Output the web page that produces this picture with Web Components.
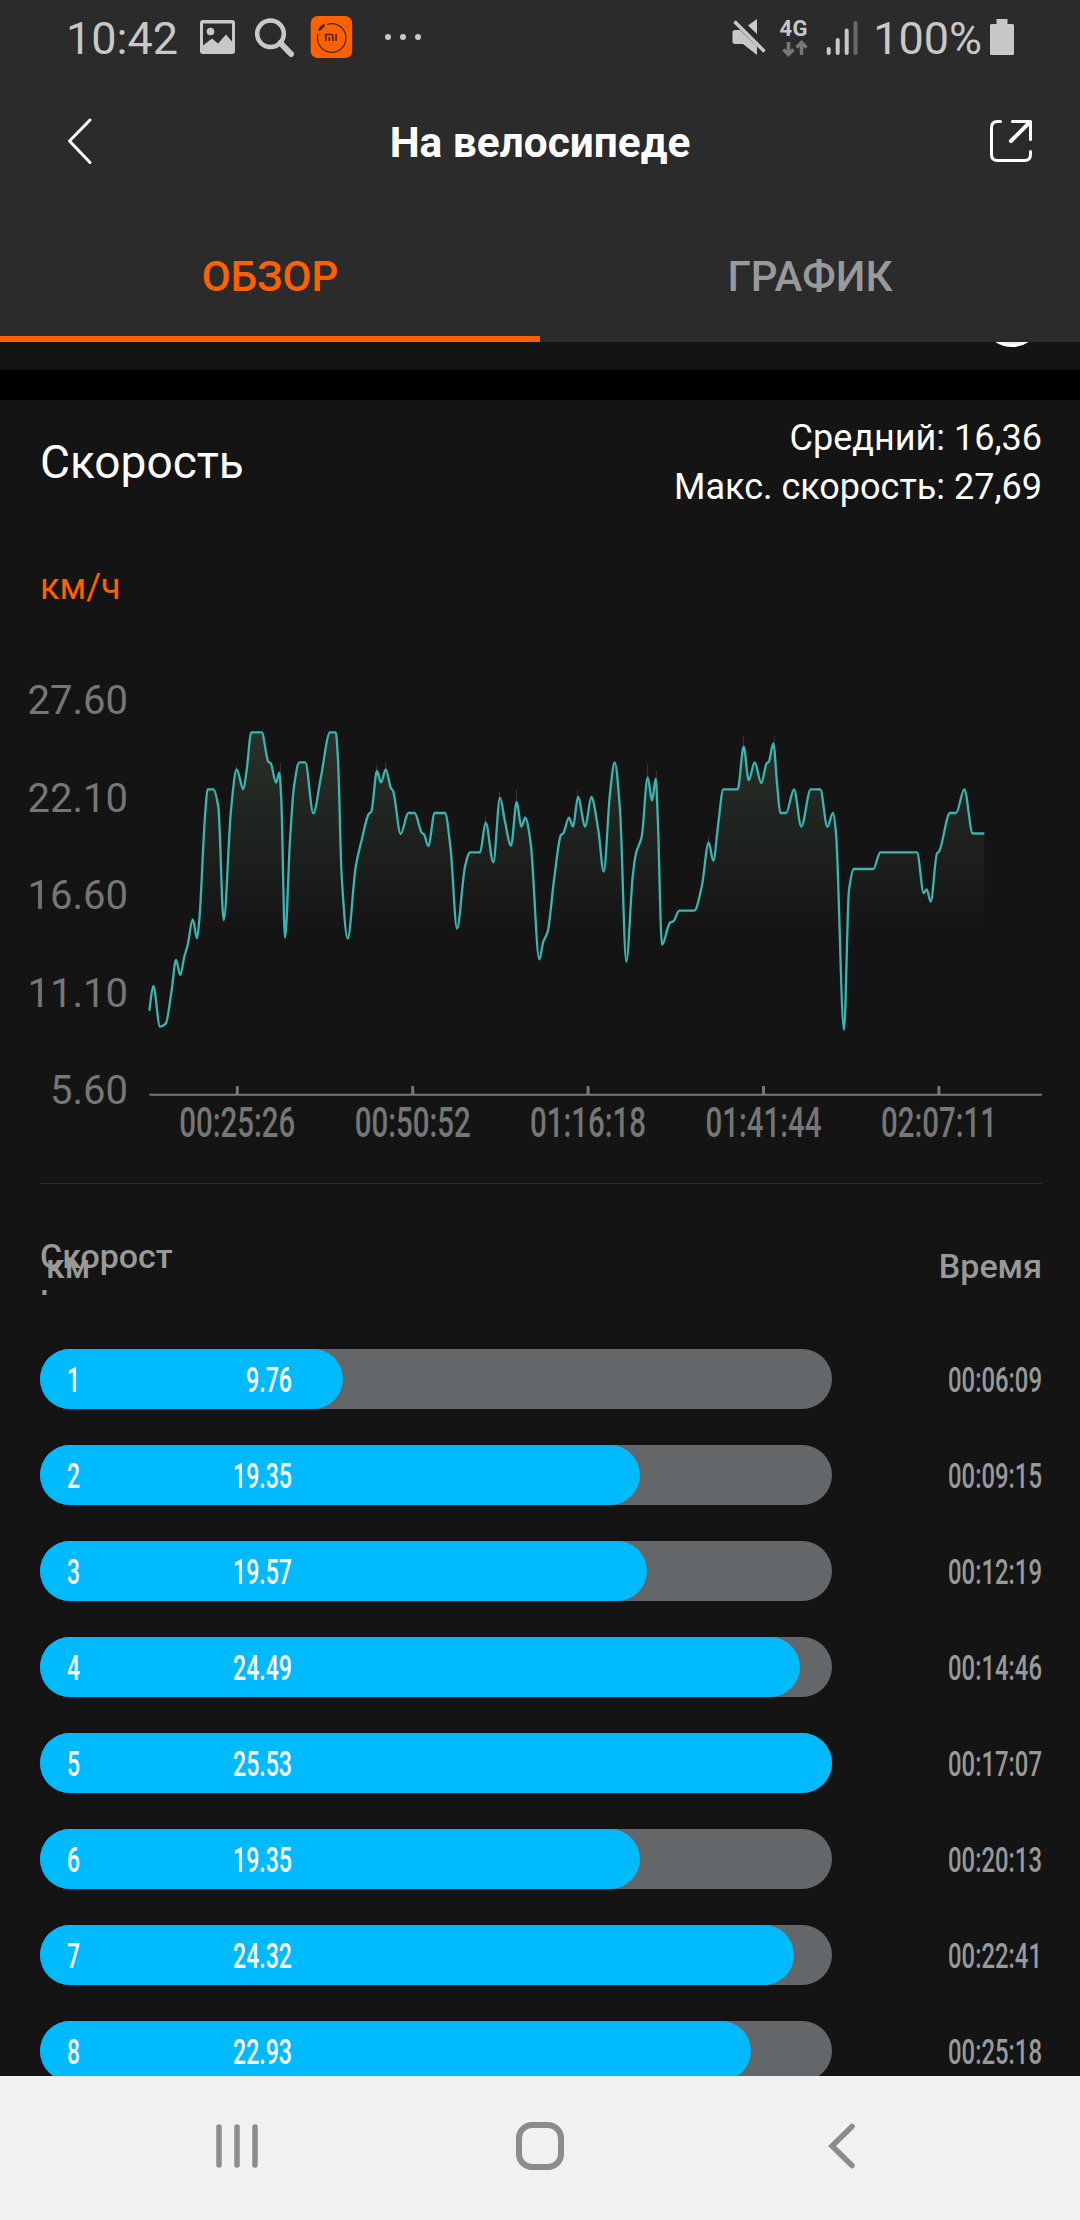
<!DOCTYPE html>
<html lang="ru">
<head>
<meta charset="utf-8">
<title>На велосипеде</title>
<style>
    :root {
        --color-bar: #2b2b2b;
        --color-card: #141414;
        --color-main: #ff6100;
        --color-muted: #999;
        --color-axis: #767676;
        --color-fill: #00baff;
        --color-track: #646769;
    }

    body {
        margin: 0;
        background-color: #000;
        font-family: Roboto, "Liberation Sans", sans-serif;
        color: #fff;
    }
</style>
</head>
<body>
<workout-app></workout-app>

<script>
// Narrow digits: the text is squeezed to a given width
class CondensedText extends HTMLElement {
    connectedCallback() {
        const width = Number(this.getAttribute('width'));
        this.attachShadow({ mode: 'open' });
        this.shadowRoot.innerHTML = `
            <style>
                :host { display: block; }
                svg { display: block; overflow: visible; }
                text { font-size: 35px; font-weight: 500; fill: currentColor; }
            </style>
            <svg width="${width}" height="48">
                <text x="0" y="37" textLength="${width}" lengthAdjust="spacingAndGlyphs">${this.getAttribute('text')}</text>
            </svg>
        `;
    }
}

class StatusBar extends HTMLElement {
    connectedCallback() {
        this.attachShadow({ mode: 'open' });
        this.shadowRoot.innerHTML = `
            <style>
                :host {
                    display: flex;
                    justify-content: space-between;
                    height: 72px;
                    padding: 0 65px 0 66px;
                    background-color: var(--color-bar);
                    color: #c8c8c8;
                    font-size: 45px;
                    line-height: 77px;
                }
                .group { display: flex; }
                svg { display: block; }
                .time { width: 124px; }
                .percent { width: 118px; text-align: right; }
            </style>
            <div class="group">
                <span class="time">10:42</span>
                <svg width="240" height="72" viewBox="190 0 240 72">
                    <path fill="#c8c8c8" fill-rule="evenodd" d="M203 20h29q3 0 3 3v28q0 3-3 3h-29q-3 0-3-3v-28q0-3 3-3zM203 23.500v22l9-7 6 5 8-9 6 7v-18z"/>
                    <circle cx="210.500" cy="31.500" r="3.800" fill="#c8c8c8"/>
                    <circle cx="270.500" cy="33.700" r="13.300" fill="none" stroke="#c8c8c8" stroke-width="4.500"/>
                    <path d="M280.500 43l10.500 11" stroke="#c8c8c8" stroke-width="6" stroke-linecap="round"/>
                    <rect x="310.700" y="16" width="41.500" height="42" rx="7" fill="#ff6100"/>
                    <path d="M327 24.500a14.300 14.300 0 1 1-9 9.500" fill="none" stroke="#4a2410" stroke-width="1.300"/>
                    <path d="M319.500 29.500l4-4" stroke="#4a2410" stroke-width="2.800" stroke-linecap="round"/>
                    <path d="M325.800 41v-6.500h5.700q1.300 0 1.300 1.500v5M329.300 37v4M336 33.800v7.200" fill="none" stroke="#4a2410" stroke-width="1.700"/>
                    <g fill="#c8c8c8"><circle cx="388" cy="37" r="3"/><circle cx="403" cy="37" r="3"/><circle cx="418" cy="37" r="3"/></g>
                </svg>
            </div>
            <div class="group">
                <svg width="134" height="72" viewBox="730 0 134 72">
                    <path fill="#c8c8c8" d="M748 25.500l9-6.500v15zM735 30h5l17 16.500v8.500l-14-11h-8q-2.500 0-2.500-2.500v-9q0-2.500 2.500-2.500z"/>
                    <path d="M734.500 21.500l30 30" stroke="#c8c8c8" stroke-width="3.500"/>
                    <text x="779.500" y="36" font-size="22" font-weight="700" fill="#c8c8c8" textLength="28">4G</text>
                    <path d="M788.500 42v12M783.500 49.500l5 5 5-5M801.500 55v-12M796.500 47.500l5-5 5 5" fill="none" stroke="#777" stroke-width="3.500"/>
                    <path d="M828.700 49v4M837.700 40v13M846.700 30.500v22.500" stroke="#c8c8c8" stroke-width="4" stroke-linecap="round"/>
                    <path d="M855.500 23v30" stroke="#6a6a6a" stroke-width="4" stroke-linecap="round"/>
                </svg>
                <span class="percent">100%</span>
                <svg width="33" height="72" viewBox="982 0 33 72">
                    <path fill="#c8c8c8" d="M996.500 19h11v5h5q1.500 0 1.500 1.500v28q0 1.500-1.500 1.500h-21q-1.500 0-1.500-1.500v-28q0-1.500 1.500-1.500h5z"/>
                </svg>
            </div>
        `;
    }
}

class PageHeader extends HTMLElement {
    connectedCallback() {
        this.attachShadow({ mode: 'open' });
        this.shadowRoot.innerHTML = `
            <style>
                :host {
                    display: grid;
                    grid-template-columns: 60px 1fr 60px;
                    align-items: center;
                    height: 142px;
                    padding: 0 40px;
                    background-color: var(--color-bar);
                }
                h1 { margin: 0 0 2px; font-size: 42.400px; font-weight: 700; text-align: center; }
                svg { display: block; fill: none; stroke: #fff; stroke-linecap: round; stroke-linejoin: round; }
            </style>
            <svg width="60" height="60" viewBox="40 113 60 60" stroke-width="3"><path d="M90 120l-20.500 21 20.500 21.500"/></svg>
            <h1><slot></slot></h1>
            <svg width="60" height="60" viewBox="980 113 60 60" stroke-width="3">
                <path d="M1000.500 121.500h-3q-6 0-6 6v27q0 6 6 6h27q6 0 6-6v-3M1012.500 121.500h18v18"/>
                <path d="M1029.500 122.500l-18.500 18.500" stroke-width="4"/>
            </svg>
        `;
    }
}

class TabBar extends HTMLElement {
    connectedCallback() {
        this.attachShadow({ mode: 'open' });
        this.shadowRoot.innerHTML = `
            <style>
                :host {
                    display: flex;
                    height: 128px;
                    background-color: var(--color-bar);
                    font-size: 42px;
                    font-weight: 500;
                    line-height: 125px;
                    text-align: center;
                }
                div { flex: 1; box-sizing: border-box; border-bottom: 6px solid transparent; color: var(--color-muted); }
                .active { color: var(--color-main); border-color: var(--color-main); }
            </style>
            <div class="active">ОБЗОР</div>
            <div>ГРАФИК</div>
        `;
    }
}

// Curve knots in chart pixels
const SPEED = [
    149.3,1010.7, 153.3,986, 160,1026.7, 165.7,1023.7, 171.7,990, 176,960, 180.3,975, 184.3,956.7, 187.7,945,
    192.7,919.3, 197,938.3, 199.3,920, 205,816.7, 207.7,789.3, 213.3,789.3, 218.3,806.7, 223.7,920, 231,810,
    236.7,769.3, 243.3,789.3, 246.7,770, 251.3,732.3, 261.7,732.3, 268.3,761.7, 270.7,763.3, 276,782.7,
    279.3,772.7, 281.3,800, 285,937.7, 290,840, 294,786.7, 299.3,762.3, 305.3,762.3, 313.3,813.3, 321,776.7,
    330,732.3, 335.7,732.3, 338,760, 341.7,876.7, 347.7,938.7, 355.7,866.7, 361.7,840, 368.7,814, 371.3,811.7,
    377,771, 381,782.7, 385.7,769.3, 391,788.3, 393,790.7, 400.7,834, 408.3,813, 414.7,813, 421.7,832.7,
    424,834.3, 428.3,846, 434.7,813, 445,813, 450.7,850, 457,928.7, 465,866.7, 470,852.3, 480,852.3,
    485.7,822.7, 493.3,862.3, 500,797.7, 505,821.7, 511,845.7, 516.7,802, 521.3,826.7, 525.3,817.7,
    530.7,843.3, 539.3,959.3, 543.3,941.7, 547.7,931.7, 554,880, 561,835, 563.3,833.3, 569,817.7, 573,826.7,
    578,797, 585.3,826.7, 591.3,797, 598.3,830, 603.7,871.7, 610,793.3, 614.7,762.3, 620,810, 626.3,961.7,
    632.7,876.7, 636,853.3, 641.7,836.7, 647.7,777.3, 652,800.7, 655.7,778.7, 657.7,816.7, 662,944.7,
    670,922.7, 673.3,921.3, 679.3,910.7, 694.3,910.7, 701.7,886.7, 708.7,842.7, 713.3,860.7, 718.3,823.3,
    723.3,789.3, 737.7,789.3, 743.7,746.7, 748.7,780.3, 754.7,762.3, 761.3,783, 766.7,763.3, 768.7,762,
    773.3,743.3, 777.3,786.7, 780.3,813, 786,813, 794,789.3, 801.3,826.7, 810.7,789.3, 820.3,789.3,
    827.3,826.7, 833,813, 836,833.3, 844,1030, 849,890, 854,869, 873.3,869, 880.3,852.3, 917,852.3,
    923.7,893, 926.7,889.3, 930.7,901.7, 937,853.3, 939,851.7, 950,813, 956,813, 964.3,789.3, 972.7,833.5,
    984.3,833.5
];

// Thin spikes that the raw samples leave above the smoothed line: x, top, bottom
const SPIKES = [
    [236.5, 765, 769], [280.5, 763, 774], [376.7, 765, 771], [385.7, 763, 769], [485.5, 816, 822],
    [499.5, 792, 797], [516.5, 789, 802], [577.5, 791, 797], [647.5, 764, 777], [656.3, 770, 779],
    [708.5, 836, 842], [743.5, 736, 746], [774.2, 736, 745]
];

function smoothPath(flat) {
    const pts = [];
    for (let i = 0; i < flat.length; i += 2) pts.push([flat[i], flat[i + 1]]);
    const slope = pts.slice(1).map((p, i) => (p[1] - pts[i][1]) / (p[0] - pts[i][0]));
    // monotone tangents: flat at every peak and dip
    const tangent = pts.map((p, i) => {
        if (i === 0) return slope[0];
        if (i === pts.length - 1) return slope[i - 1];
        const a = slope[i - 1];
        const b = slope[i];
        return a * b <= 0 ? 0 : 2 * a * b / (a + b);
    });
    let d = `M${pts[0]}`;
    for (let i = 1; i < pts.length; i++) {
        const [x0, y0] = pts[i - 1];
        const [x1, y1] = pts[i];
        const h = (x1 - x0) / 3;
        d += `C${x0 + h} ${y0 + tangent[i - 1] * h} ${x1 - h} ${y1 - tangent[i] * h} ${x1} ${y1}`;
    }
    return d;
}

class SpeedChart extends HTMLElement {
    connectedCallback() {
        const line = smoothPath(SPEED);
        const yLabels = ['27.60', '22.10', '16.60', '11.10', '5.60'];
        const xLabels = ['00:25:26', '00:50:52', '01:16:18', '01:41:44', '02:07:11'];
        this.attachShadow({ mode: 'open' });
        this.shadowRoot.innerHTML = `
            <style>
                :host { display: block; }
                svg { display: block; }
                text { fill: var(--color-axis); }
                .y { font-size: 40px; text-anchor: end; }
                .x { font-size: 42px; font-weight: 500; }
            </style>
            <svg width="1080" height="576" viewBox="0 607 1080 576">
                <defs>
                    <linearGradient id="area" gradientUnits="userSpaceOnUse" x1="0" y1="730" x2="0" y2="932">
                        <stop offset="0" stop-color="#2b302a"/>
                        <stop offset="0.500" stop-color="#1f231f"/>
                        <stop offset="1" stop-color="#141414"/>
                    </linearGradient>
                </defs>
                <path d="${line}V932H149.300z" fill="url(#area)"/>
                <path d="M149 932h836v110h-836z" fill="#141414"/>
                ${SPIKES.map(([x, top, bottom]) => `<path d="M${x} ${top}V${bottom}" stroke="#333" stroke-width="1.200"/>`).join('')}
                <path d="${line}" fill="none" stroke="#3ab5b2" stroke-width="2.300"/>
                <path d="M149.500 1094.700H1042" stroke="#767676" stroke-width="2"/>
                ${yLabels.map((t, i) => `<text class="y" x="128" y="${714 + i * 97.5}">${t}</text>`).join('')}
                ${xLabels.map((t, i) => {
                    const x = 237.3 + i * 175.4;
                    return `<path d="M${x} 1086v8" stroke="#767676" stroke-width="3"/>
                        <text class="x" x="${x - 58}" y="1137" textLength="116" lengthAdjust="spacingAndGlyphs">${t}</text>`;
                }).join('')}
            </svg>
        `;
    }
}

class SpeedCard extends HTMLElement {
    connectedCallback() {
        this.attachShadow({ mode: 'open' });
        this.shadowRoot.innerHTML = `
            <style>
                :host { display: block; background-color: var(--color-card); }
                .head {
                    display: flex;
                    justify-content: space-between;
                    align-items: center;
                    padding: 14px 38px 0 40px;
                }
                h2 { margin: 0 0 2px; font-size: 46px; font-weight: 400; }
                .stats { font-size: 36px; line-height: 49px; text-align: right; }
                .unit { margin: 54px 0 0 40px; font-size: 36px; line-height: 42px; color: var(--color-main); }
                speed-chart { margin-top: -1px; }
                hr { margin: 0 38px 0 40px; border: 0; height: 1px; background-color: #2a2a2a; }
            </style>
            <div class="head">
                <h2>Скорость</h2>
                <div class="stats"><div>Средний: 16,36</div><div>Макс. скорость: 27,69</div></div>
            </div>
            <div class="unit">км/ч</div>
            <speed-chart></speed-chart>
            <hr>
        `;
    }
}

class LapRow extends HTMLElement {
    connectedCallback() {
        const speed = this.getAttribute('speed');
        this.attachShadow({ mode: 'open' });
        this.shadowRoot.innerHTML = `
            <style>
                :host { display: flex; justify-content: space-between; align-items: center; height: 60px; }
                .track {
                    display: grid;
                    width: 792px;
                    height: 60px;
                    border-radius: 30px;
                    background-color: var(--color-track);
                }
                .fill, .labels { grid-area: 1 / 1; }
                .fill { width: ${speed / 25.53 * 100}%; border-radius: 30px; background-color: var(--color-fill); }
                .labels {
                    display: flex;
                    justify-content: space-between;
                    align-items: center;
                    width: 225px;
                    padding-left: 27px;
                }
                .time { color: var(--color-muted); }
            </style>
            <div class="track">
                <div class="fill"></div>
                <div class="labels">
                    <condensed-text text="${this.getAttribute('km')}" width="13"></condensed-text>
                    <condensed-text text="${speed}" width="${speed.length === 5 ? 59 : 46}"></condensed-text>
                </div>
            </div>
            <condensed-text class="time" text="${this.getAttribute('time')}" width="94"></condensed-text>
        `;
    }
}

class LapList extends HTMLElement {
    connectedCallback() {
        const laps = [
            ['9.76', '00:06:09'], ['19.35', '00:09:15'], ['19.57', '00:12:19'], ['24.49', '00:14:46'],
            ['25.53', '00:17:07'], ['19.35', '00:20:13'], ['24.32', '00:22:41'], ['22.93', '00:25:18']
        ];
        this.attachShadow({ mode: 'open' });
        this.shadowRoot.innerHTML = `
            <style>
                :host { display: block; padding: 0 38px 0 40px; background-color: var(--color-card); }
                .head {
                    display: grid;
                    grid-template-columns: 137px 1fr;
                    align-items: center;
                    box-sizing: border-box;
                    height: 165px;
                    padding-bottom: 2px;
                    font-size: 34px;
                    font-weight: 500;
                    line-height: 40px;
                    color: var(--color-muted);
                }
                .km, .speed { grid-area: 1 / 1; }
                .km { padding-left: 6px; }
                /* the last letter wraps and is cut by the fixed height */
                .speed { height: 59px; overflow: hidden; word-break: break-all; }
                .time { text-align: right; }
                .rows { display: flex; flex-direction: column; gap: 36px; }
            </style>
            <div class="head">
                <div class="km">км</div>
                <div class="speed">Скорость</div>
                <div class="time">Время</div>
            </div>
            <div class="rows">
                ${laps.map(([speed, time], i) => `<lap-row km="${i + 1}" speed="${speed}" time="${time}"></lap-row>`).join('')}
            </div>
        `;
    }
}

class NavBar extends HTMLElement {
    connectedCallback() {
        this.attachShadow({ mode: 'open' });
        this.shadowRoot.innerHTML = `
            <style>
                :host {
                    display: flex;
                    justify-content: space-between;
                    box-sizing: border-box;
                    height: 144px;
                    padding: 40px 209px 0 207px;
                    background-color: #f1f1f1;
                }
                svg { fill: none; stroke: #8c8c8c; stroke-width: 6; stroke-linecap: round; }
            </style>
            <svg width="60" height="60"><path stroke-width="5.500" d="M12 11v38M30 11v38M48 11v38"/></svg>
            <svg width="60" height="60"><rect x="10" y="9" width="42" height="42" rx="13"/></svg>
            <svg width="60" height="60"><path stroke-width="5.500" d="M41 10.500l-20 19.500 20 19.500"/></svg>
        `;
    }
}

class WorkoutApp extends HTMLElement {
    connectedCallback() {
        this.attachShadow({ mode: 'open' });
        this.shadowRoot.innerHTML = `
            <style>
                :host { display: flex; flex-direction: column; width: 1080px; height: 2220px; overflow: hidden; }
                main { flex: 1; min-height: 0; overflow: hidden; }
                .previous { display: flex; justify-content: flex-end; height: 28px; padding-right: 38px; background-color: var(--color-card); }
                .previous svg { display: block; }
                .gap { height: 30px; }
            </style>
            <status-bar></status-bar>
            <page-header>На велосипеде</page-header>
            <tab-bar></tab-bar>
            <main>
                <div class="previous">
                    <svg width="60" height="28"><circle cx="30" cy="-25" r="28.500" fill="#e6e6e6" stroke="#fff" stroke-width="3"/></svg>
                </div>
                <div class="gap"></div>
                <speed-card></speed-card>
                <lap-list></lap-list>
            </main>
            <nav-bar></nav-bar>
        `;
    }
}

customElements.define('condensed-text', CondensedText);
customElements.define('status-bar', StatusBar);
customElements.define('page-header', PageHeader);
customElements.define('tab-bar', TabBar);
customElements.define('speed-chart', SpeedChart);
customElements.define('speed-card', SpeedCard);
customElements.define('lap-row', LapRow);
customElements.define('lap-list', LapList);
customElements.define('nav-bar', NavBar);
customElements.define('workout-app', WorkoutApp);
</script>
</body>
</html>
